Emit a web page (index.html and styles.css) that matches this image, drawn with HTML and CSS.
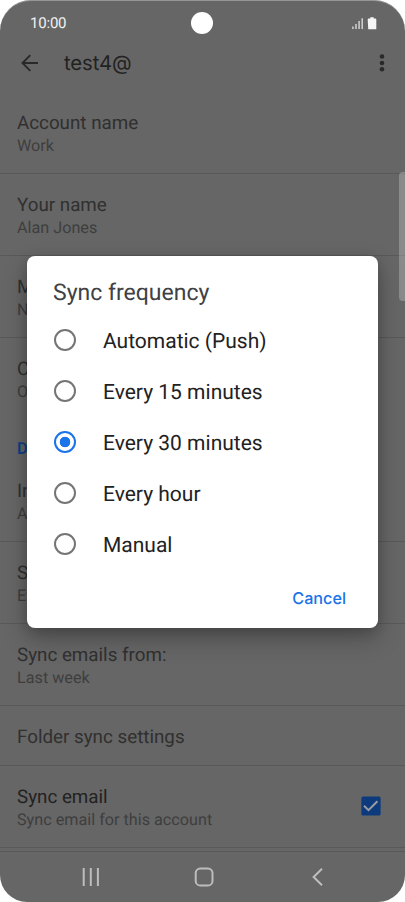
FILE: index.html
```html
<!DOCTYPE html>
<html lang="en">
<head>
<meta charset="utf-8">
<title>Account settings</title>
<link rel="stylesheet" href="styles.css">
</head>
<body>
<div class="phone">
  <div class="status">
    <span class="time">10:00</span>
    <span class="camera"></span>
    <svg class="signals" width="25" height="13" viewBox="0 0 25 13"><path d="M.9 12V9.5M4 12V7M7.1 12V4M10.2 12V1.2" stroke="#d2d2d2" stroke-width="1.5"/><path d="M15.7 2.5q0-1 1-1h1.6V.3h3.4v1.2h1.6q1 0 1 1v9.2q0 .5-.5.5h-7.1q-.5 0-.5-.5z" fill="#f5f5f5"/></svg>
  </div>
  <header class="appbar">
    <svg class="back" width="18" height="18" viewBox="0 0 18 18"><path d="M17 9H1.8M9.3 1.2L1.5 9l7.8 7.8" fill="none" stroke="#292929" stroke-width="1.9"/></svg>
    <h1><span>test4@</span></h1>
    <svg class="more" width="6" height="18" viewBox="0 0 6 18" fill="#292929"><circle cx="3" cy="2.5" r="2.3"/><circle cx="3" cy="9" r="2.3"/><circle cx="3" cy="15.3" r="2.3"/></svg>
  </header>
  <main class="list">
    <div class="row"><b><span>Account name</span></b><small><span>Work</span></small></div>
    <div class="row"><b><span>Your name</span></b><small><span>Alan Jones</span></small></div>
    <div class="row"><b>M</b><small>N</small></div>
    <div class="row last"><b>C</b><small>O</small></div>
    <h2>D</h2>
    <div class="row"><b>In</b><small>A</small></div>
    <div class="row"><b>S</b><small>Ev</small></div>
    <div class="row"><b><span>Sync emails from:</span></b><small><span>Last week</span></small></div>
    <div class="row single"><b><span>Folder sync settings</span></b></div>
    <div class="row check"><div><b class="strong"><span>Sync email</span></b><small><span>Sync email for this account</span></small></div>
      <svg width="20" height="20" viewBox="0 0 20 20"><rect x=".4" y=".4" width="19.2" height="19.2" rx="1.6" fill="#0d3a7c"/><path d="M3 9.8l4.5 4.4 8.9-9" fill="none" stroke="#989ba2" stroke-width="2"/></svg>
    </div>
  </main>
  <nav>
    <svg width="18" height="20" viewBox="0 0 18 20"><path d="M1.7 1v18M8.8 1v18M15.9 1v18" stroke="#bdbdbd" stroke-width="2"/></svg>
    <svg class="home" width="20" height="20" viewBox="0 0 20 20"><rect x="1.7" y="1.5" width="16.8" height="17" rx="4.6" fill="none" stroke="#bdbdbd" stroke-width="2"/></svg>
    <svg width="14" height="20" viewBox="0 0 14 20"><path d="M11 1.8L2.6 10l8.4 8.2" fill="none" stroke="#bdbdbd" stroke-width="2"/></svg>
  </nav>
  <div class="scroll"></div>
  <section class="dialog">
    <h3><span>Sync frequency</span></h3>
    <div class="option"><i></i><span>Automatic (Push)</span></div>
    <div class="option"><i></i><span>Every 15 minutes</span></div>
    <div class="option on"><i></i><span>Every 30 minutes</span></div>
    <div class="option"><i></i><span>Every hour</span></div>
    <div class="option"><i></i><span>Manual</span></div>
    <div class="actions"><span>Cancel</span></div>
  </section>
</div>
</body>
</html>
```
FILE: styles.css
```css
* { box-sizing: border-box; }
body { margin: 0; background: #fff; font-family: Roboto, "Liberation Sans", sans-serif; text-rendering: geometricPrecision; }
.phone { position: relative; width: 405px; height: 902px; overflow: hidden; border-radius: 31px 31px 27px 27px; background: #666; border-top: 1px solid #969696; }
.status { display: flex; height: 44px; padding: 0 28px 0 30px; align-items: center; justify-content: space-between; }
.time { width: 140px; color: #f1f1f1; font-size: 15px; letter-spacing: -.2px; }
.camera { width: 22px; height: 22px; border-radius: 50%; background: #fff; margin-left: 21px; flex: none; }
.signals { flex: none; margin-left: auto; }
.appbar { display: flex; height: 47px; align-items: flex-start; padding: 9px 20px 0 21px; color: #222; }
.appbar h1 { margin: -4px auto 0 25px; font: 400 20.3px/26px Inter, Roboto, sans-serif; letter-spacing: -.1px; }
.row { height: 82px; padding: 18px 17px 0; border-bottom: 1px solid #595959; display: flex; flex-direction: column; }
.row b { font-weight: 400; font-size: 18.8px; line-height: 26px; color: #303030; }
.row small { font-size: 16.2px; line-height: 22px; color: #3e3e3e; margin-top: -1px; }
.row b.strong { color: #222; }
.row.last { border-color: transparent; }
.list h2 { height: 40px; margin: 0; padding: 19px 17px 0; font-size: 16.5px; line-height: 22px; font-weight: 600; color: #0e3f86; }
.row.single { height: 60px; padding-top: 18px; }
.row.check { flex-direction: row; align-items: flex-start; justify-content: space-between; padding-right: 24px; }
.check div { display: flex; flex-direction: column; }
.check svg { margin-top: 12px; }
nav { height: 51px; margin-top: 3px; border-top: 1px solid #595959; display: flex; justify-content: space-between; align-items: center; padding: 0 80px 0 82px; }
.home { margin-right: 4px; }
.scroll { position: absolute; right: 0; top: 171px; width: 6px; height: 129px; background: rgba(255,255,255,.24); border-radius: 4px 0 0 4px; }
.dialog { position: absolute; left: 27px; top: 255px; width: 351px; height: 372px; background: #fff; border-radius: 8px; padding: 23px 26px 0; box-shadow: 0 11px 24px rgba(0,0,0,.25), 0 3px 12px rgba(0,0,0,.16); }
.dialog h3 { margin: 0; height: 37px; color: #404144; font-weight: 400; font-size: 23px; line-height: 28px; }
.option { display: flex; align-items: center; height: 50.8px; color: #222; font-size: 21px; line-height: 26px; }
.option span { padding-top: 2px; }
.option i { width: 22px; height: 22px; border: 2px solid #757575; border-radius: 50%; margin: -2px 27px 0 1px; flex: none; }
.on i { border-color: #1a73e8; background: radial-gradient(circle, #1a73e8 5px, transparent 5.6px); }
.actions { display: flex; justify-content: flex-end; padding: 17px 6px 0 0; color: #1a73e8; font: 500 16.2px/22px Inter, Roboto, sans-serif; }
```
